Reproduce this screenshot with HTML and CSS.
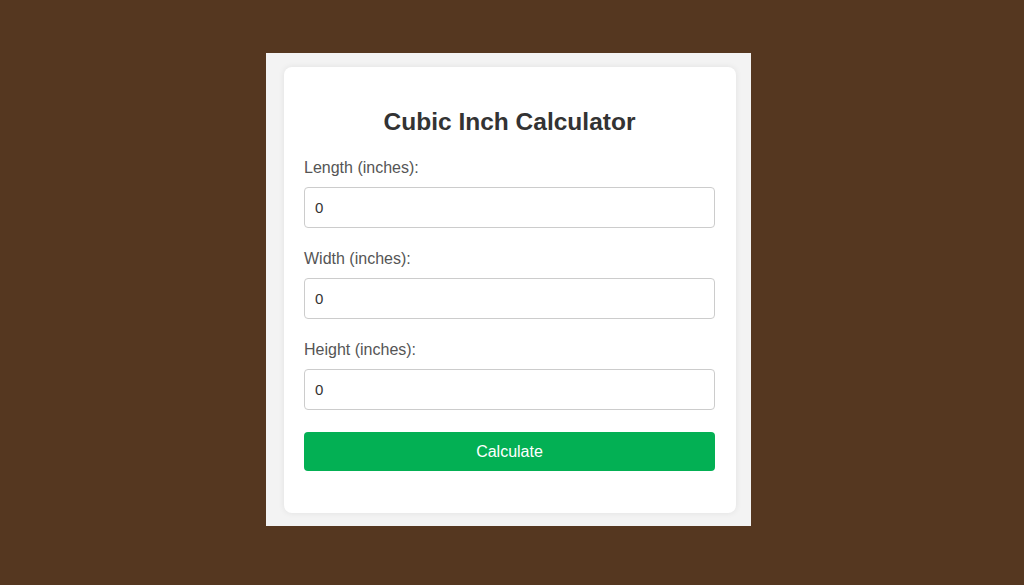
FILE: index.html
```html
<!DOCTYPE html>
<html lang="en">
<head>
    <meta charset="UTF-8">
    <meta name="viewport" content="width=device-width, initial-scale=1.0">
    <title>Cubic Inch Calculator</title>
    <link rel="stylesheet" href="styles.css">
</head>
<body>
    <div class="frame">
        <div class="container">
            <h1>Cubic Inch Calculator</h1>

            <div class="form-group">
                <label for="length">Length (inches):</label>
                <input type="number" id="length" value="0">
            </div>

            <div class="form-group">
                <label for="width">Width (inches):</label>
                <input type="number" id="width" value="0">
            </div>

            <div class="form-group">
                <label for="height">Height (inches):</label>
                <input type="number" id="height" value="0">
            </div>

            <button class="btn">Calculate</button>
        </div>
    </div>
</body>
</html>
```

FILE: styles.css
```css
* {
    margin: 0;
    padding: 0;
    box-sizing: border-box;
    font-family: 'Liberation Sans', Arial, sans-serif;
}

body {
    background-color: #553720;
    padding-top: 53px;
}

.frame {
    width: 485px;
    margin: 0 0 0 266px;
    background-color: #f3f3f3;
    padding: 14px 15px 13px 18px;
}

.container {
    background-color: #fff;
    padding: 20px 21px 42px 20px;
    border-radius: 8px;
    box-shadow: 0 0 6px rgba(0, 0, 0, 0.08);
}

h1 {
    text-align: center;
    font-size: 24.5px;
    line-height: 29px;
    color: #333;
    margin-top: 20px;
    margin-bottom: 23px;
}

.form-group {
    margin-bottom: 22px;
}

.form-group label {
    display: block;
    font-size: 16px;
    line-height: 18px;
    color: #555;
    margin-bottom: 10px;
}

.form-group input {
    width: 100%;
    height: 41px;
    padding: 0 10px;
    font-size: 15px;
    color: #333;
    border: 1px solid #ccc;
    border-radius: 4px;
    outline: none;
    -moz-appearance: textfield;
}

.form-group input::-webkit-inner-spin-button,
.form-group input::-webkit-outer-spin-button {
    -webkit-appearance: none;
}

.btn {
    display: block;
    width: 100%;
    height: 39px;
    background-color: #03b054;
    color: #fff;
    font-size: 16px;
    border: none;
    border-radius: 4px;
    cursor: pointer;
}
```
